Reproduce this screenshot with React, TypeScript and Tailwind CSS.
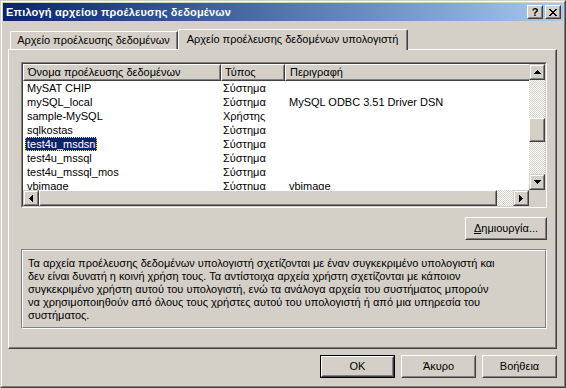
import React from 'react';

const rows: [string, string, string][] = [
    ['MySAT CHIP', 'Σύστημα', ''],
    ['mySQL_local', 'Σύστημα', 'MySQL ODBC 3.51 Driver DSN'],
    ['sample-MySQL', 'Χρήστης', ''],
    ['sqlkostas', 'Σύστημα', ''],
    ['test4u_msdsn', 'Σύστημα', ''],
    ['test4u_mssql', 'Σύστημα', ''],
    ['test4u_mssql_mos', 'Σύστημα', ''],
    ['vbimage', 'Σύστημα', 'vbimage'],
];

const infoLines = [
    'Τα αρχεία προέλευσης δεδομένων υπολογιστή σχετίζονται με έναν συγκεκριμένο υπολογιστή και',
    'δεν είναι δυνατή η κοινή χρήση τους. Τα αντίστοιχα αρχεία χρήστη σχετίζονται με κάποιον',
    'συγκεκριμένο χρήστη αυτού του υπολογιστή, ενώ τα ανάλογα αρχεία του συστήματος μπορούν',
    'να χρησιμοποιηθούν από όλους τους χρήστες αυτού του υπολογιστή ή από μια υπηρεσία του',
    'συστήματος.',
];

const Raised = ({
    className = '',
    inner = '',
    children,
}: {
    className?: string;
    inner?: string;
    children?: React.ReactNode;
}) => (
    <div className={`border border-t-white border-l-white border-r-[#404040] border-b-[#404040] ${className}`}>
        <div className={`h-full w-full border border-t-[#d4d0c8] border-l-[#d4d0c8] border-r-[#808080] border-b-[#808080] bg-[#d4d0c8] ${inner}`}>
            {children}
        </div>
    </div>
);

// scrollbar arrow button: light edge outside, white inside
const ScrollBtn = ({ dir }: { dir: 'up' | 'down' | 'left' | 'right' }) => {
    const pts = {
        up: '3.5,0 7,4 0,4',
        down: '0,0 7,0 3.5,4',
        left: '4,0 4,7 0,3.5',
        right: '0,0 0,7 4,3.5',
    }[dir];
    const vertical = dir === 'up' || dir === 'down';
    return (
        <div className="w-[16px] h-[16px] shrink-0 border border-t-[#d4d0c8] border-l-[#d4d0c8] border-r-[#404040] border-b-[#404040]">
            <div className="h-full w-full border border-t-white border-l-white border-r-[#808080] border-b-[#808080] bg-[#d4d0c8] flex items-center justify-center">
                <svg width={vertical ? 7 : 4} height={vertical ? 4 : 7} shapeRendering="crispEdges">
                    <polygon points={pts} fill="#000" />
                </svg>
            </div>
        </div>
    );
};

const checker =
    'bg-[image:repeating-conic-gradient(#d4d0c8_0_25%,#ffffff_0_50%)] bg-[length:2px_2px]';

const ListView = () => (
    <div className="h-[146px] border border-t-[#808080] border-l-[#808080] border-r-white border-b-white">
        <div className="h-full grid grid-cols-[1fr_16px] grid-rows-[1fr_16px] bg-white border border-t-[#404040] border-l-[#404040] border-r-[#d4d0c8] border-b-[#d4d0c8]">
            <div className="min-h-0 min-w-0 overflow-hidden">
                <div className="flex h-[17px]">
                    <Raised className="w-[198px] shrink-0" inner="pl-[3px] flex items-center whitespace-nowrap">
                        Όνομα προέλευσης δεδομένων
                    </Raised>
                    <Raised className="w-[64px] shrink-0" inner="pl-[2px] flex items-center whitespace-nowrap">
                        Τύπος
                    </Raised>
                    <Raised className="w-[400px] shrink-0" inner="pl-[3px] flex items-center whitespace-nowrap">
                        Περιγραφή
                    </Raised>
                </div>
                {rows.map(([name, type, desc]) => {
                    const selected = name === 'test4u_msdsn';
                    return (
                        <div key={name} className="flex h-[14px] leading-[14px] whitespace-nowrap">
                            <div className="w-[198px] shrink-0 pl-[2px]">
                                <span
                                    className={
                                        selected
                                            ? 'inline-block h-[14px] px-[2px] bg-[#0a246a] text-white outline outline-1 outline-dotted outline-[#f0d890] -outline-offset-1'
                                            : 'inline-block h-[14px] px-[2px]'
                                    }
                                >
                                    {name}
                                </span>
                            </div>
                            <div className="w-[64px] shrink-0 pl-[2px]">{type}</div>
                            <div className="pl-[4px]">{desc}</div>
                        </div>
                    );
                })}
            </div>
            <div className="flex flex-col min-h-0">
                <ScrollBtn dir="up" />
                <div className={`flex-1 ${checker}`}>
                    <Raised className="mt-[38px] h-[24px]" />
                </div>
                <ScrollBtn dir="down" />
            </div>
            <div className="flex min-w-0">
                <ScrollBtn dir="left" />
                <Raised className="w-[458px] shrink-0" />
                <div className={`flex-1 ${checker}`} />
                <ScrollBtn dir="right" />
            </div>
            <div className="bg-[#d4d0c8]" />
        </div>
    </div>
);

const CloseGlyph = () => (
    <svg width="8" height="7" shapeRendering="crispEdges">
        <path d="M0 0h2v1H0zM6 0h2v1H6zM1 1h2v1H1zM5 1h2v1H5zM2 2h4v1H2zM3 3h2v1H3zM2 4h4v1H2zM1 5h2v1H1zM5 5h2v1H5zM0 6h2v1H0zM6 6h2v1H6z" fill="#000" />
    </svg>
);

export default function App() {
    return (
        <div className="w-[566px] h-[388px] font-['Liberation_Sans',Arial,sans-serif] text-[11px] text-black select-none">
            <div className="h-full border border-t-[#d4d0c8] border-l-[#d4d0c8] border-r-[#404040] border-b-[#404040]">
                <div className="h-full flex flex-col p-px bg-[#d4d0c8] border border-t-white border-l-white border-r-[#808080] border-b-[#808080]">
                    {/* title bar */}
                    <div className="h-[18px] shrink-0 flex items-center justify-between pl-[3px] pr-[2px] bg-linear-to-r from-[#0a246a] to-[#a6caf0]">
                        <span className="text-white font-bold text-[11px] tracking-[0.2px] whitespace-nowrap">
                            Επιλογή αρχείου προέλευσης δεδομένων
                        </span>
                        <div className="flex gap-[2px]">
                            <Raised className="w-[16px] h-[14px]" inner="flex items-center justify-center">
                                <span className="font-bold text-[11px] leading-none">?</span>
                            </Raised>
                            <Raised className="w-[16px] h-[14px]" inner="flex items-center justify-center">
                                <CloseGlyph />
                            </Raised>
                        </div>
                    </div>

                    <div className="flex flex-col pl-[5px] pr-[6px] pt-[8px]">
                        {/* tabs */}
                        <div className="relative z-10 flex items-end h-[20px] pl-[2px]">
                            <div className="w-[168px] h-[18px] rounded-tl-[2px] border-t border-l border-r border-t-white border-l-white border-r-[#404040]">
                                <div className="h-full border-r border-r-[#808080] flex items-center justify-center whitespace-nowrap pb-px">
                                    Αρχείο προέλευσης δεδομένων
                                </div>
                            </div>
                            <div className="w-[230px] h-[21px] -mb-px rounded-t-[2px] bg-[#d4d0c8] border-t border-l border-r border-t-white border-l-white border-r-[#404040]">
                                <div className="h-full border-r border-r-[#808080] flex items-center justify-center whitespace-nowrap pb-[2px]">
                                    Αρχείο προέλευσης δεδομένων υπολογιστή
                                </div>
                            </div>
                        </div>

                        {/* tab page */}
                        <div className="h-[300px] border border-t-white border-l-white border-r-[#404040] border-b-[#404040]">
                            <div className="h-full flex flex-col pt-[12px] pl-[12px] pr-[8px] border-r border-b border-r-[#808080] border-b-[#808080]">
                                <ListView />
                                <div className="flex justify-end mt-[9px]">
                                    <Raised className="w-[82px] h-[23px]" inner="flex items-center justify-center">
                                        <span>
                                            <span className="underline">Δ</span>ημιουργία...
                                        </span>
                                    </Raised>
                                </div>
                                <div className="mt-[9px] h-[80px] border border-t-[#808080] border-l-[#808080] border-r-white border-b-white">
                                    <div className="h-full border border-t-white border-l-white border-r-[#808080] border-b-[#808080] pt-[6px] pl-[5px] leading-[13px]">
                                        {infoLines.map((l) => (
                                            <div key={l} className="whitespace-nowrap">
                                                {l}
                                            </div>
                                        ))}
                                    </div>
                                </div>
                            </div>
                        </div>

                        {/* dialog buttons */}
                        <div className="flex justify-end gap-[6px] mt-[6px]">
                            <div className="w-[75px] h-[23px] border border-black">
                                <Raised className="h-full" inner="flex items-center justify-center">
                                    OK
                                </Raised>
                            </div>
                            <Raised className="w-[75px] h-[23px]" inner="flex items-center justify-center">
                                Άκυρο
                            </Raised>
                            <Raised className="w-[75px] h-[23px]" inner="flex items-center justify-center">
                                Βοήθεια
                            </Raised>
                        </div>
                    </div>
                </div>
            </div>
        </div>
    );
}
